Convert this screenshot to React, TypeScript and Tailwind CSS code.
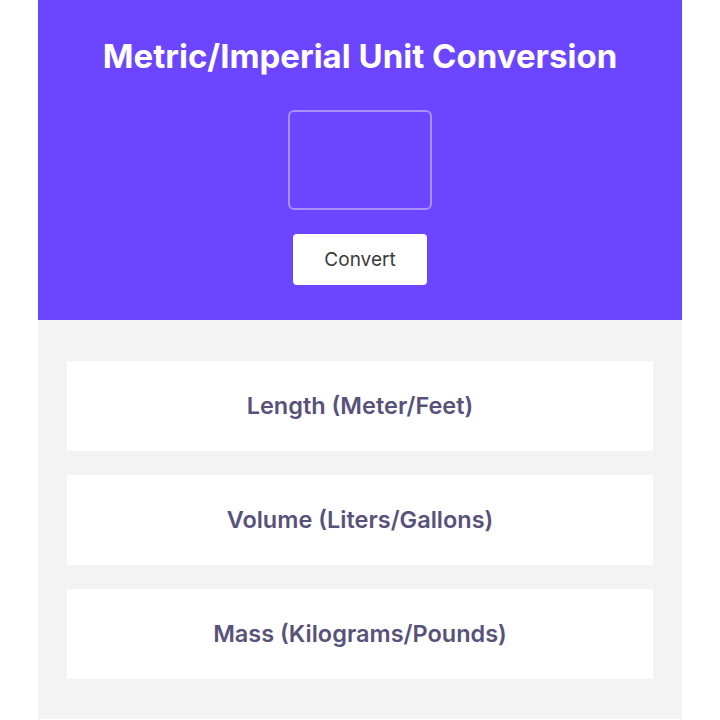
import React, { useState } from 'react';

const units = ['Length (Meter/Feet)', 'Volume (Liters/Gallons)', 'Mass (Kilograms/Pounds)'];

const App: React.FC = () => {
  const [value, setValue] = useState<string>('');

  return (
    <div className="min-h-screen bg-white font-['Inter',sans-serif]">
      <div className="mx-[38px] flex flex-col">
        <header className="flex flex-col items-center bg-[#6b45ff] pt-9 pb-[35px]">
          <h1 className="text-[33px] leading-10 font-bold text-white">Metric/Imperial Unit Conversion</h1>
          <textarea
            value={value}
            onChange={e => setValue(e.target.value)}
            className="mt-[34px] h-[100px] w-[144px] resize-none rounded-md border-2 border-white/40 bg-transparent p-2 text-white outline-none"
          />
          <button className="mt-6 h-[51px] w-[134px] rounded bg-white pt-0.5 text-[19px] text-[#3a3a3a]">Convert</button>
        </header>
        <main className="flex flex-col gap-6 bg-[#f3f3f3] px-[29px] pt-[41px] pb-10">
          {units.map(u => (
            <div key={u} className="flex h-[90px] items-center justify-center bg-white">
              <span className="text-[23.5px] font-semibold text-[#58527a]">{u}</span>
            </div>
          ))}
        </main>
      </div>
    </div>
  );
};

export default App;
